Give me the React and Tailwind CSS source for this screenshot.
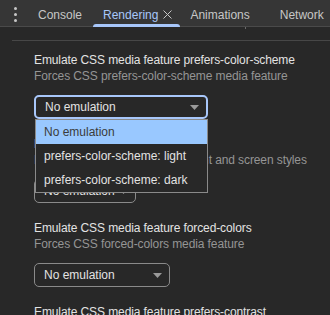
const font = { fontFamily: '"Liberation Sans", Arial, sans-serif' };

function Arrow() {
  return (
    <svg width="9" height="5" viewBox="0 0 9 5" className="shrink-0">
      <path d="M0 0 L9 0 L4.5 5 Z" fill="#9a9a9a" />
    </svg>
  );
}

function Select({ width, focused }) {
  return (
    <div
      className={`flex h-[24px] items-center justify-between rounded-[5px] bg-[#282828] pl-[9px] pr-[7px] text-[12px] text-[#e3e3e3] ${
        focused ? "border-2 border-[#a8c7fa]" : "border border-[#8a8a8a]"
      }`}
      style={{ width }}
    >
      <span>No emulation</span>
      <Arrow />
    </div>
  );
}

function Section({ title, desc, width, focused, children }) {
  return (
    <div className="relative h-[84px] pl-[34px]">
      <div className="h-[16px] text-[12px] leading-[16px] tracking-[-0.1px] text-[#e3e3e3]">{title}</div>
      <div className="h-[16px] text-[12px] leading-[16px] tracking-[-0.1px] text-[#959595]">{desc}</div>
      <div className="mt-[11px]">
        <Select width={width} focused={focused} />
      </div>
      {children}
    </div>
  );
}

export default function App() {
  return (
    <div className="h-[315px] w-[330px] overflow-hidden bg-[#282828]" style={font}>
      <div className="flex h-[27px] items-center border-b border-[#4a4a4a] bg-[#363636] pt-[3px] text-[12px] whitespace-nowrap">
        <div className="ml-[14px] flex w-[4px] flex-col gap-[3px]">
          <span className="h-[3px] w-[3px] rounded-full bg-[#c7c7c7]" />
          <span className="h-[3px] w-[3px] rounded-full bg-[#c7c7c7]" />
          <span className="h-[3px] w-[3px] rounded-full bg-[#c7c7c7]" />
        </div>
        <span className="ml-[20px] text-[#c7c7c7]">Console</span>
        <div className="relative ml-[11px] flex h-full items-center pl-[10px] pr-[8px] text-[#a8c7fa]">
          <span>Rendering</span>
          <svg width="9" height="9" viewBox="0 0 9 9" className="ml-[5px]">
            <path d="M0.5 0.5 L8.5 8.5 M8.5 0.5 L0.5 8.5" stroke="#c7c7c7" strokeWidth="1" />
          </svg>
          <span className="absolute bottom-[-1px] left-0 right-0 h-[3px] rounded-t-[3px] bg-[#a8c7fa]" />
        </div>
        <span className="ml-[10px] text-[#c7c7c7]">Animations</span>
        <span className="ml-[30px] text-[#c7c7c7]">Network</span>
      </div>
      <div className="ml-[245px] h-[2px] w-[1px] bg-[#6a6a6a]" />
      <div className="ml-[12px] mt-[11px] h-[1px] bg-[#474747]" />
      <div className="pt-[11px]">
        <Section
          title="Emulate CSS media feature prefers-color-scheme"
          desc="Forces CSS prefers-color-scheme media feature"
          width={174}
          focused
        >
          <div className="absolute left-[35px] top-[67px] z-10 w-[173px] border border-[#8a8a8a] bg-[#282828] text-[12px]">
            <div className="flex h-[24px] items-center bg-[#99c8ff] pl-[8px] text-[#3b3b3b]">No emulation</div>
            <div className="flex h-[24px] items-center pl-[8px] text-[#e3e3e3]">prefers-color-scheme: light</div>
            <div className="flex h-[24px] items-center pl-[8px] text-[#e3e3e3]">prefers-color-scheme: dark</div>
          </div>
        </Section>
        <Section
          title="Emulate CSS media type"
          desc="Forces media type for testing print and screen styles"
          width={102}
        />
        <Section
          title="Emulate CSS media feature forced-colors"
          desc="Forces CSS forced-colors media feature"
          width={136}
        />
        <Section
          title="Emulate CSS media feature prefers-contrast"
          desc="Forces CSS prefers-contrast media feature"
          width={136}
        />
      </div>
    </div>
  );
}
